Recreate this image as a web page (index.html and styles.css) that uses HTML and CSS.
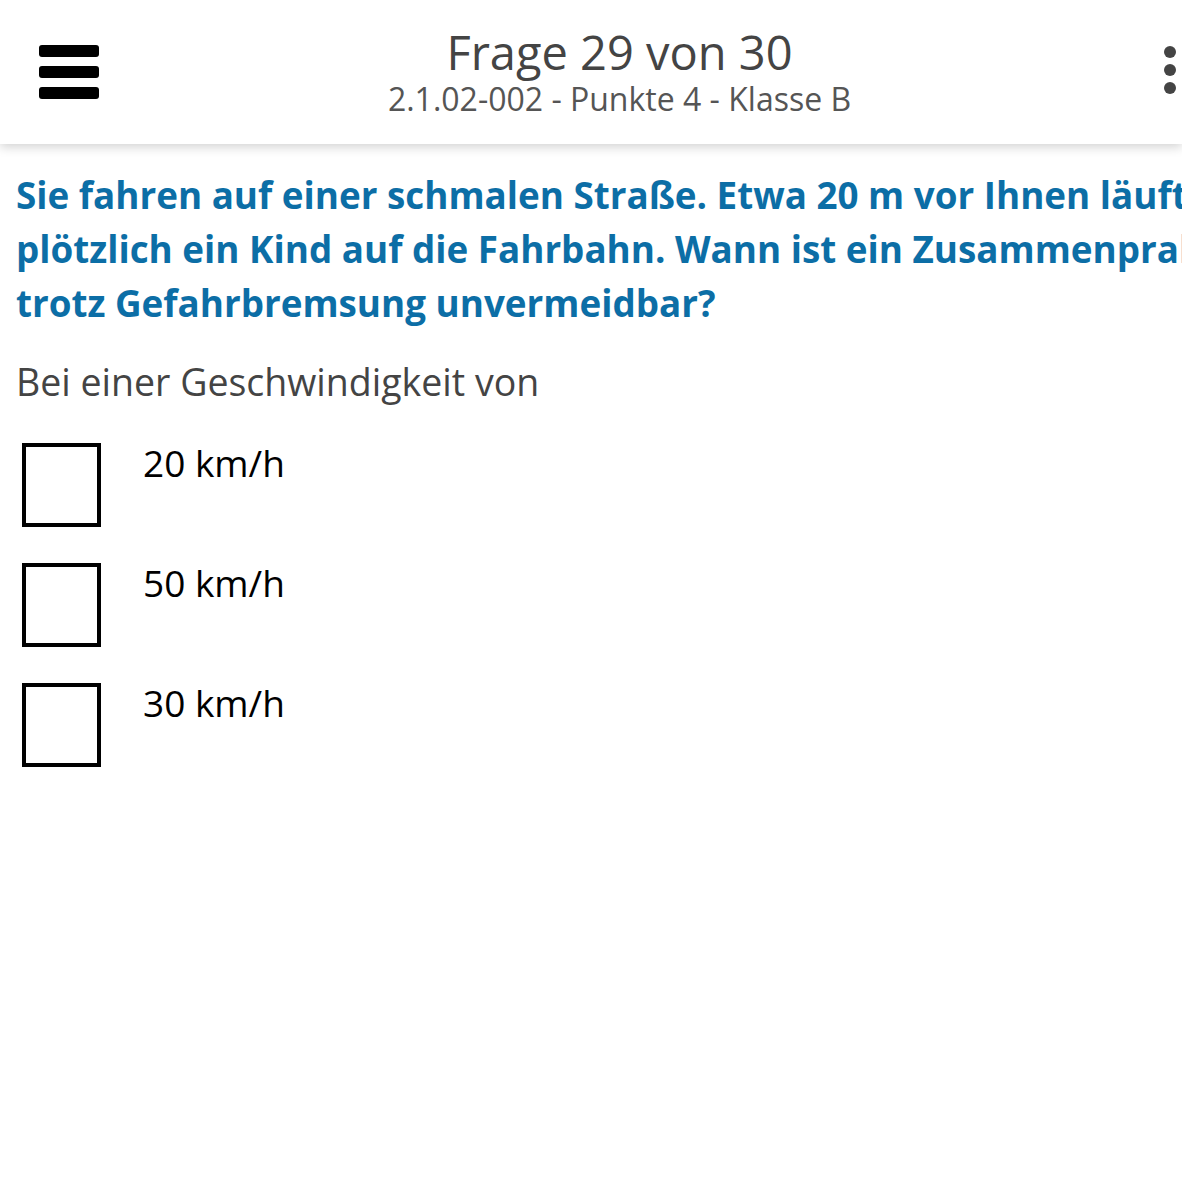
FILE: index.html
```html
<!DOCTYPE html>
<html lang="de">
<head>
    <meta charset="UTF-8">
    <meta name="viewport" content="width=device-width, initial-scale=1.0">
    <title>Frage 29 von 30</title>
    <link rel="stylesheet" href="styles.css">
</head>
<body>

    <header class="topbar">
        <div class="menu-button">
            <span class="bar"></span>
            <span class="bar"></span>
            <span class="bar"></span>
        </div>
        <div class="title-block">
            <div class="title">Frage 29 von 30</div>
            <div class="subtitle">2.1.02-002 - Punkte 4 - Klasse B</div>
        </div>
        <div class="more-button">
            <span class="dot"></span>
            <span class="dot"></span>
            <span class="dot"></span>
        </div>
    </header>

    <main class="question">
        <p class="question-text">
            Sie fahren auf einer schmalen Straße. Etwa 20 m vor Ihnen läuft<br>
            plötzlich ein Kind auf die Fahrbahn. Wann ist ein Zusammenprall<br>
            trotz Gefahrbremsung unvermeidbar?
        </p>

        <p class="question-intro">Bei einer Geschwindigkeit von</p>

        <ul class="answers">
            <li class="answer">
                <span class="checkbox"></span>
                <span class="answer-label">20 km/h</span>
            </li>
            <li class="answer">
                <span class="checkbox"></span>
                <span class="answer-label">50 km/h</span>
            </li>
            <li class="answer">
                <span class="checkbox"></span>
                <span class="answer-label">30 km/h</span>
            </li>
        </ul>
    </main>

</body>
</html>
```

FILE: styles.css
```css
:root {
    --question-blue: #0c6ea6;
    --text-dark: #444444;
    --text-grey: #555555;
}

body {
    font-family: 'Open Sans', 'Noto Sans', sans-serif;
    margin: 0;
    padding: 0;
    background-color: #ffffff;
    overflow: hidden;
    width: 1182px;
}

/* top bar */
.topbar {
    display: flex;
    align-items: flex-start;
    height: 144px;
    background-color: #ffffff;
    box-shadow: 0 3px 10px rgba(0, 0, 0, 0.18);
    position: relative;
    z-index: 1;
}

.menu-button {
    width: 60px;
    padding: 45px 0 0 39px;
    display: flex;
    flex-direction: column;
    gap: 9px;
}

.menu-button .bar {
    display: block;
    height: 12px;
    background-color: #000000;
    border-radius: 3px;
}

.title-block {
    flex: 1;
    text-align: center;
    padding-top: 27px;
}

.title {
    font-size: 47px;
    line-height: 50px;
    color: var(--text-dark);
}

.subtitle {
    margin-top: 2px;
    font-size: 32px;
    line-height: 40px;
    color: var(--text-grey);
}

.more-button {
    width: 42px;
    padding-top: 46px;
    display: flex;
    flex-direction: column;
    gap: 6px;
}

.more-button .dot {
    display: block;
    width: 12px;
    height: 12px;
    margin-left: 24px;
    border-radius: 50%;
    background-color: var(--text-dark);
}

/* question */
.question {
    padding: 0 16px;
}

/* the screen is cut at the right edge, so the lines run past it */
.question-text {
    margin: 0;
    padding-top: 24px;
    font-size: 36.8px;
    font-weight: 700;
    line-height: 54px;
    color: var(--question-blue);
    white-space: nowrap;
}

.question-intro {
    margin: 28px 0 0;
    font-size: 37.5px;
    line-height: 48px;
    color: var(--text-dark);
}

.answers {
    list-style: none;
    margin: 37px 0 0;
    padding: 0;
}

.answer {
    display: flex;
    align-items: flex-start;
    height: 120px;
}

.checkbox {
    width: 71px;
    height: 76px;
    margin-left: 6px;
    border: 4px solid #000000;
}

.answer-label {
    margin-left: 42px;
    font-size: 37px;
    line-height: 40px;
    color: #000000;
}
```
